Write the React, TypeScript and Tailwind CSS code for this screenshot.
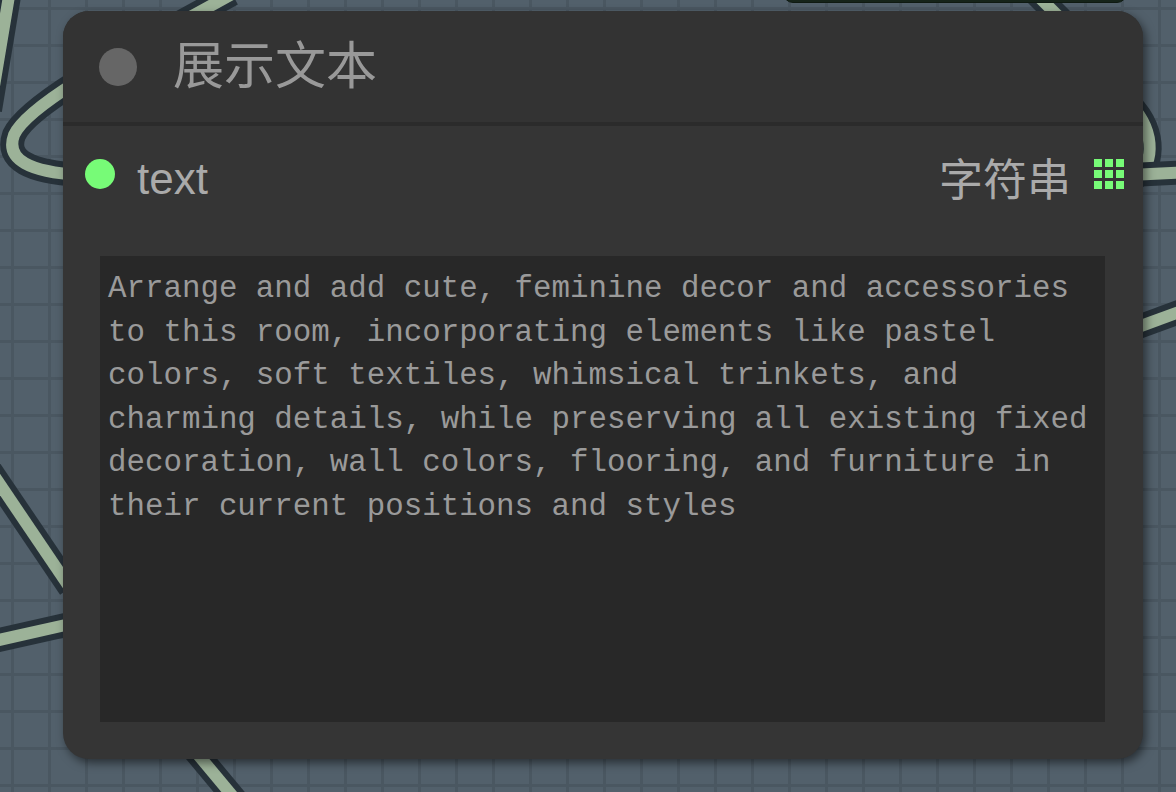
const lines = [
  "Arrange and add cute, feminine decor and accessories",
  "to this room, incorporating elements like pastel",
  "colors, soft textiles, whimsical trinkets, and",
  "charming details, while preserving all existing fixed",
  "decoration, wall colors, flooring, and furniture in",
  "their current positions and styles",
]

const wires = [
  "M 10 -10 L -10 110",
  "M 232 -6 C 150 40, 30 100, 14 135 C 5 160, 30 172, 80 175",
  "M 1030 -12 L 1070 28",
  "M 1125 100 C 1156 125, 1156 165, 1135 178",
  "M 1130 175 L 1190 172",
  "M 1130 330 L 1190 308",
  "M -20 455 L 70 588",
  "M -10 642 L 70 624",
  "M 190 745 L 240 805",
]

const Wires = () => (
  <svg className="absolute inset-0" width="1176" height="792" viewBox="0 0 1176 792">
    {wires.map(d => (
      <g key={d} fill="none" strokeLinecap="butt">
        <path d={d} stroke="#27323a" strokeWidth={24} />
        <path d={d} stroke="#9cb298" strokeWidth={12} />
      </g>
    ))}
  </svg>
)

const TypeIcon = () => (
  <div className="grid grid-cols-3 gap-[3px]">
    {[0, 1, 2, 3, 4, 5, 6, 7, 8].map(i => (
      <div key={i} className="w-[8px] h-[8px] bg-[#77fb77]" />
    ))}
  </div>
)

const App = () => {
  return (
    <div className="relative w-[1176px] h-[792px] overflow-hidden bg-[#52606b] bg-[linear-gradient(to_right,#4a5761_3px,transparent_3px),linear-gradient(to_bottom,#4a5761_3px,transparent_3px)] bg-[size:37px_37px] bg-[position:11px_7px]">
      <Wires />
      <div className="absolute left-[783px] top-[-20px] w-[344px] h-[23px] rounded-b-[10px] bg-[#16241a] border border-[#0f1a12]" />

      <div className="relative pt-[11px] pl-[63px]">
        <div className="w-[1080px] h-[748px] flex flex-col rounded-[26px] bg-[#353535] shadow-[3px_4px_10px_rgba(0,0,0,0.5)] font-['Liberation_Sans','Noto_Sans_CJK_SC',sans-serif]">
          <div className="h-[111px] flex items-center pl-[36px] bg-[#333333] rounded-t-[26px]">
            <div className="w-[38px] h-[38px] rounded-full bg-[#666666]" />
            <span className="ml-[36px] pb-[8px] text-[51px] text-[#999999] font-['Noto_Sans_CJK_SC',sans-serif]">展示文本</span>
          </div>
          <div className="h-[4px] bg-[#2b2b2b]" />

          <div className="h-[96px] flex items-center pl-[22px] pr-[19px]">
            <div className="w-[30px] h-[30px] rounded-full bg-[#77fb77]" />
            <span className="ml-[22px] pt-[9px] text-[44px] leading-none text-[#aaaaaa]">text</span>
            <span className="ml-auto pt-[5px] text-[44px] text-[#aaaaaa] font-['Noto_Sans_CJK_SC',sans-serif]">字符串</span>
            <div className="ml-[23px]">
              <TypeIcon />
            </div>
          </div>

          <div className="mt-[34px] ml-[37px] w-[1005px] h-[466px] bg-[#282828] pl-[8px] pt-[11px] overflow-hidden">
            {lines.map(l => (
              <div key={l} className="whitespace-pre text-[30.8px] leading-[43.5px] text-[#9a9a9a] font-['Liberation_Mono',monospace]">
                {l}
              </div>
            ))}
          </div>
        </div>
      </div>
    </div>
  )
}

export default App
